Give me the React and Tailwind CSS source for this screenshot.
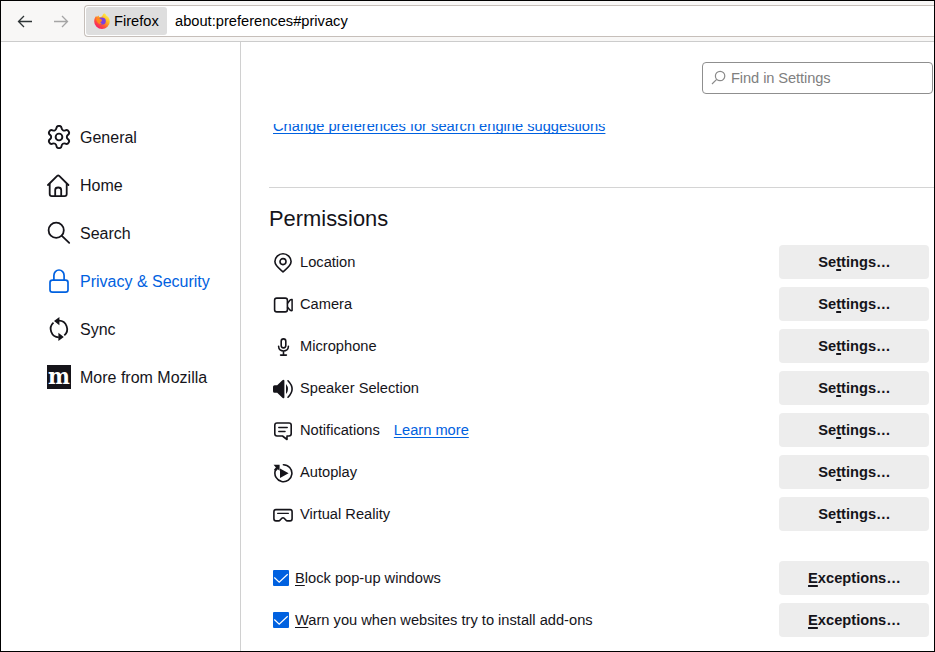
import React from "react";

function NavSvg({ children }) {
  return (
    <svg className="h-6 w-6 shrink-0" viewBox="0 0 24 24" fill="none" stroke="currentColor" strokeWidth="1.8" strokeLinecap="round" strokeLinejoin="round">
      {children}
    </svg>
  );
}

function RowSvg({ children }) {
  return (
    <svg className="mt-0.5 h-5 w-5 shrink-0" viewBox="0 0 20 20" fill="none" stroke="currentColor" strokeWidth="1.6" strokeLinecap="round" strokeLinejoin="round">
      {children}
    </svg>
  );
}

const navItems = [
  {
    label: "General",
    icon: (
      <NavSvg>
        <g transform="translate(12 12) scale(1.12) translate(-12 -12)" strokeWidth="1.7">
          <path d="M9.671 4.136a2.34 2.34 0 0 1 4.659 0 2.34 2.34 0 0 0 3.319 1.915 2.34 2.34 0 0 1 2.33 4.033 2.34 2.34 0 0 0 0 3.831 2.34 2.34 0 0 1-2.33 4.033 2.34 2.34 0 0 0-3.319 1.915 2.34 2.34 0 0 1-4.659 0 2.34 2.34 0 0 0-3.32-1.915 2.34 2.34 0 0 1-2.33-4.033 2.34 2.34 0 0 0 0-3.831A2.34 2.34 0 0 1 6.35 6.051a2.34 2.34 0 0 0 3.319-1.915" />
          <circle cx="12" cy="12" r="3" />
        </g>
      </NavSvg>
    ),
  },
  {
    label: "Home",
    icon: (
      <NavSvg>
        <path d="M1 12 L10.2 2.9 Q11.2 2 12.2 2.9 L21.4 12" />
        <path d="M2.7 11 V21 Q2.7 23.1 4.8 23.1 H17.6 Q19.7 23.1 19.7 21 V11" />
        <path d="M8.2 23 V17 Q8.2 14.5 11.2 14.5 Q14.2 14.5 14.2 17 V23" />
      </NavSvg>
    ),
  },
  {
    label: "Search",
    icon: (
      <NavSvg>
        <circle cx="9.2" cy="9.2" r="7.6" />
        <path d="M14.9 14.8 L22.2 21.9" />
      </NavSvg>
    ),
  },
  {
    label: "Privacy & Security",
    active: true,
    icon: (
      <NavSvg>
        <rect x="3" y="11.1" width="18" height="12" rx="2.4" strokeWidth="1.7" />
        <path d="M6.9 11 V6.4 A5.1 5.4 0 0 1 17.1 6.4 V11" strokeWidth="1.7" />
      </NavSvg>
    ),
  },
  {
    label: "Sync",
    icon: (
      <NavSvg>
        <path d="M12 3.7 A8.3 8.4 0 0 1 17.3 18.4" strokeLinecap="butt" />
        <path d="M11.8 20.3 A8.3 8.4 0 0 1 6.5 5.6" strokeLinecap="butt" />
        <path d="M12.4 0 V8.2 L7 4.1 Z M11.4 15.8 V24 L16.8 19.9 Z" fill="currentColor" stroke="none" />
      </NavSvg>
    ),
  },
  {
    label: "More from Mozilla",
    icon: (
      <span className="flex h-6 w-6 shrink-0 items-center justify-center bg-[#15141a] text-white">
        <span className="-translate-y-px text-[23px] font-bold leading-6 [font-family:'DejaVu_Serif_Condensed','DejaVu_Serif',serif]">m</span>
      </span>
    ),
  },
];

const permissions = [
  {
    label: "Location",
    icon: (
      <RowSvg>
        <path d="M10 18.8 C7.5 16.6 1.9 13 1.9 8.6 A8.1 7.8 0 0 1 18.1 8.6 C18.1 13 12.5 16.6 10 18.8 Z" />
        <circle cx="10" cy="8.6" r="3" />
      </RowSvg>
    ),
  },
  {
    label: "Camera",
    icon: (
      <RowSvg>
        <rect x="1.6" y="3.1" width="12.8" height="13.8" rx="2.2" />
        <path d="M14.6 8.2 L16.9 5.3 Q17.9 4.3 19.1 4.6 V15.6 Q17.9 15.9 16.9 14.9 L14.6 12.2" strokeWidth="1.5" />
      </RowSvg>
    ),
  },
  {
    label: "Microphone",
    icon: (
      <RowSvg>
        <rect x="8.2" y="1.9" width="4.6" height="9" rx="2.3" />
        <path d="M5.6 9.3 C5.6 15.5 15.4 15.5 15.4 9.3 M10.5 14 V18 M7.6 18.1 H13.4" />
      </RowSvg>
    ),
  },
  {
    label: "Speaker Selection",
    icon: (
      <RowSvg>
        <path d="M0 7.8 Q0 6.2 1.6 6.2 H4.2 L9.4 1.3 Q11.4 0 11.4 2 V18 Q11.4 20 9.4 18.7 L4.2 13.8 H1.6 Q0 13.8 0 12.2 Z" fill="currentColor" stroke="none" />
        <path d="M13 5 Q17 10 13 15 Z" fill="currentColor" stroke="none" />
        <path d="M15 1.8 Q23.2 10 15 18.2" strokeWidth="1.6" />
      </RowSvg>
    ),
  },
  {
    label: "Notifications",
    link: "Learn more",
    icon: (
      <RowSvg>
        <path d="M4 2 H16 Q18.2 2 18.2 4.2 V12.8 Q18.2 15 16 15 H14 V18.5 L9.5 15 H4 Q1.8 15 1.8 12.8 V4.2 Q1.8 2 4 2 Z" />
        <path d="M5.8 6.6 H14.2 M5.8 10.4 H12" strokeWidth="1.5" />
      </RowSvg>
    ),
  },
  {
    label: "Autoplay",
    icon: (
      <RowSvg>
        <path d="M10.4 1.7 A8.5 8.5 0 1 1 2.3 7.6" />
        <path d="M0.6 1.8 H6.6 V7.8 L4.8 6.2 L2.7 8.4 L1 6.6 L2.9 4.4 Z M7 5.4 V15 L15.6 10.2 Z" fill="currentColor" stroke="none" />
      </RowSvg>
    ),
  },
  {
    label: "Virtual Reality",
    icon: (
      <RowSvg>
        <path d="M3 4.6 H17 Q19.1 4.6 19.1 6.7 V13.5 Q19.1 15.9 17 15.9 H14.6 Q13.5 15.9 12.6 14.7 Q11 12.8 10 12.8 Q9 12.8 7.4 14.7 Q6.5 15.9 5.4 15.9 H3 Q.9 15.9 .9 13.5 V6.7 Q.9 4.6 3 4.6 Z" />
        <path d="M4.6 8.3 H15.4" strokeWidth="1.3" />
      </RowSvg>
    ),
  },
];

function Key({ children }) {
  return <span className="underline decoration-1 underline-offset-2 [text-decoration-skip-ink:none]">{children}</span>;
}

function Button({ before, letter, after }) {
  return (
    <button className="h-[34px] w-[150px] rounded bg-[#ededed] pl-px text-center font-bold leading-[34px]">
      {before}
      <span className="underline decoration-2 underline-offset-2 [text-decoration-skip-ink:none]">{letter}</span>
      {after}
    </button>
  );
}

function Check({ letter, rest }) {
  return (
    <div className="flex h-[34px] items-center pl-1">
      <svg className="h-4 w-4" viewBox="0 0 16 16">
        <rect width="16" height="16" rx="1" fill="#0061e0" />
        <path d="M1.3 7.5 L6.2 12.2 L14.7 4.2" fill="none" stroke="#fff" strokeWidth="1.2" />
      </svg>
      <span className="ml-1.5 flex-1">
        <Key>{letter}</Key>
        {rest}
      </span>
      <Button before="" letter="E" after="xceptions…" />
    </div>
  );
}

function FirefoxLogo() {
  return (
    <svg className="h-4 w-4" viewBox="0 0 16 16">
      <defs>
        <linearGradient id="flame" x1="0.85" y1="0.1" x2="0.2" y2="0.95">
          <stop offset="0" stopColor="#fff44f" />
          <stop offset="0.35" stopColor="#ffb21f" />
          <stop offset="0.65" stopColor="#ff5a36" />
          <stop offset="1" stopColor="#f5156c" />
        </linearGradient>
      </defs>
      <path d="M10.2 .2 C12 1.2 12.4 2.3 12.6 3 C14 3.2 15.8 5.6 15.8 8.4 A7.8 7.6 0 0 1 .2 8.4 C.2 6 1 4.2 2.2 2.9 L2.8 4 L4.4 2.6 L5.2 4 C6.5 4.2 8.2 3.6 8.4 2.8 Q8.8 1 10.2 .2 Z" fill="url(#flame)" />
      <path d="M5 5.8 Q6.2 4.4 8.6 4.6 Q12 5.2 11.8 8.4 Q11.4 11.6 8 11.6 Q5 11.4 4.6 8.8 Q5.6 9.4 7.2 8.8 L8.2 7.4 L6.2 6.8 Z" fill="#7b3fe0" />
      <path d="M2 5.4 Q4 4.4 5.4 5.6 L7.8 6.6 Q7.8 7.6 6.4 7.9 Q5.6 9.8 8 10 Q6 11.8 4 10 Q2.4 8.4 2 5.4 Z" fill="#ff8a1c" />
    </svg>
  );
}

export default function App() {
  return (
    <div className="flex h-[652px] w-[935px] flex-col overflow-hidden border border-black bg-white text-[14.67px] text-[#15141a] [font-family:'Liberation_Sans',Arial,sans-serif]">
      <header className="flex h-[41px] shrink-0 items-start border-b border-[#cccccc] bg-[#f8f7f6] pt-1">
        <div className="flex h-8 w-[83px] items-center gap-5 pl-4">
          <svg className="h-4 w-4" viewBox="0 0 16 16" fill="none" stroke="#2e3436" strokeWidth="1.3">
            <path d="M15 8.5 H1.5 M7 3 L1.5 8.5 L7 14" />
          </svg>
          <svg className="h-4 w-4" viewBox="0 0 16 16" fill="none" stroke="#a5a5a5" strokeWidth="1.3">
            <path d="M1 8.5 H14.5 M9 3 L14.5 8.5 L9 14" />
          </svg>
        </div>
        <div className="flex h-8 flex-1 items-center rounded-l border border-r-0 border-[#c6bfba] bg-white pl-px text-black">
          <div className="flex h-7 w-[81px] items-center gap-1 rounded-[3px] bg-[#dedede] pl-2">
            <FirefoxLogo />
            <span>Firefox</span>
          </div>
          <span className="ml-2">about:preferences#privacy</span>
        </div>
      </header>

      <div className="flex min-h-0 flex-1">
        <nav className="w-60 shrink-0 border-r border-[#d0d0d0] pl-[46px] pt-[71px] text-base">
          {navItems.map((item) => (
            <div key={item.label} className={"flex h-12 items-center gap-[9px] " + (item.active ? "text-[#0061e0]" : "")}>
              {item.icon}
              <span className="pt-0.5">{item.label}</span>
            </div>
          ))}
        </nav>

        <main className="flex min-w-0 flex-1 flex-col pl-7">
          <div className="flex h-[82px] shrink-0 justify-end pr-px pt-5">
            <div className="flex h-8 w-[231px] items-center rounded border border-[#8f8f8f] pl-2 text-[#808080]">
              <svg className="mr-1 h-4 w-4" viewBox="0 0 16 16" fill="none" stroke="#8a8a8a" strokeWidth="1.2">
                <circle cx="9.1" cy="6" r="4.7" />
                <path d="M5.7 9.4 L1 14" />
              </svg>
              <span className="tracking-[-0.09px]">Find in Settings</span>
            </div>
          </div>

          <div className="min-h-0 flex-1 overflow-hidden">
            <div className="-mt-[7px] h-[71px] border-b border-[#d4d4d4] pl-1 leading-[18px]">
              <a className="text-[#0061e0] underline decoration-1 underline-offset-2 [text-decoration-skip-ink:none]">Change preferences for search engine suggestions</a>
            </div>
            <h1 className="mt-[15px] h-[42px] text-[21.9px] leading-8">Permissions</h1>

            <div className="flex flex-col gap-2 pr-[5px]">
              {permissions.map((item) => (
                <div key={item.label} className="flex h-[34px] items-center pl-1">
                  {item.icon}
                  <span className="ml-[7px]">{item.label}</span>
                  {item.link && (
                    <a className="ml-[14px] text-[#0061e0] underline decoration-1 underline-offset-2 [text-decoration-skip-ink:none]">{item.link}</a>
                  )}
                  <span className="flex-1" />
                  <Button before="Se" letter="t" after="tings…" />
                </div>
              ))}
            </div>

            <div className="mt-[30px] flex flex-col gap-2 pr-[5px]">
              <Check letter="B" rest="lock pop-up windows" />
              <Check letter="W" rest="arn you when websites try to install add-ons" />
            </div>
          </div>
        </main>
      </div>
    </div>
  );
}
